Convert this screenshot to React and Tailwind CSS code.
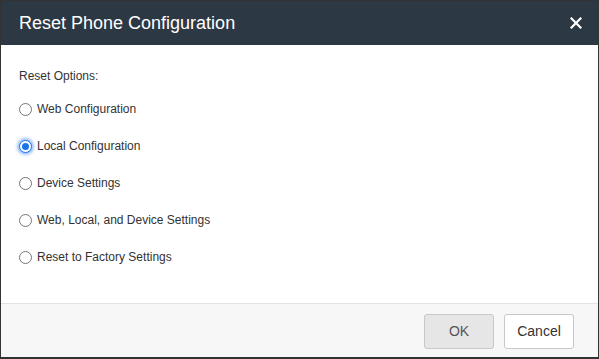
import React, { useState } from "react";

const options = [
  "Web Configuration",
  "Local Configuration",
  "Device Settings",
  "Web, Local, and Device Settings",
  "Reset to Factory Settings",
];

export default function App() {
  const [selected, setSelected] = useState(1);

  return (
    <div
      className="w-[599px] h-[359px] flex flex-col bg-white border border-[#333] border-b-2 overflow-hidden"
      style={{ fontFamily: '"Liberation Sans", Arial, sans-serif' }}
    >
      {/* Header */}
      <div className="h-[44px] shrink-0 bg-[#2d3845] flex items-center justify-between pl-[18px] pr-[16px]">
        <h2 className="text-white text-[18px]">Reset Phone Configuration</h2>
        <svg width="12" height="12" viewBox="0 0 12 12" className="text-white">
          <path d="M1.5 1.5 L10.5 10.5 M10.5 1.5 L1.5 10.5" stroke="currentColor" strokeWidth="2.2" strokeLinecap="square" />
        </svg>
      </div>

      {/* Body */}
      <div className="flex-1 px-[18px] pt-[24px] text-[12px] text-[#333]">
        <p className="leading-[14px]">Reset Options:</p>
        <div className="flex flex-col gap-[23px] mt-[19px]">
          {options.map((label, i) => {
            const on = selected === i;
            return (
              <label key={label} className="flex items-center gap-[5px] h-[14px] cursor-pointer">
                <input
                  type="radio"
                  name="reset"
                  checked={on}
                  onChange={() => setSelected(i)}
                  className="sr-only"
                />
                <span
                  className={`w-[13px] h-[13px] rounded-full border flex items-center justify-center bg-white ${
                    on
                      ? "border-[#1a73e8] shadow-[0_0_3px_2px_rgba(59,130,246,0.5)]"
                      : "border-[#767676]"
                  }`}
                >
                  {on && <span className="w-[7px] h-[7px] rounded-full bg-[#1a73e8]" />}
                </span>
                <span>{label}</span>
              </label>
            );
          })}
        </div>
      </div>

      {/* Footer */}
      <div className="h-[54px] shrink-0 bg-[#f7f7f7] border-t border-[#e3e3e3] flex items-center justify-end gap-[10px] pr-[24px] pt-[2px]">
        <button className="w-[70px] h-[35px] rounded-[3px] border border-[#c8c8c8] bg-[#e6e6e6] text-[#555] text-[14px]">
          OK
        </button>
        <button className="w-[70px] h-[35px] rounded-[3px] border border-[#c8c8c8] bg-white text-[#333] text-[14px]">
          Cancel
        </button>
      </div>
    </div>
  );
}
